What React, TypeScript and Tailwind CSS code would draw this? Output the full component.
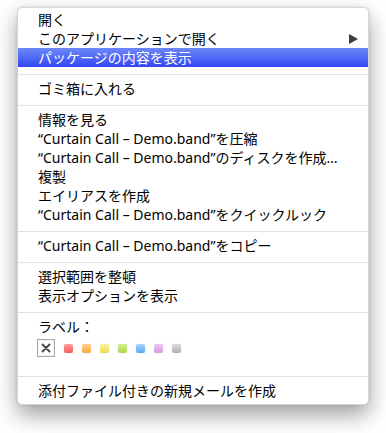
import React from "react";

const Row = ({ children, active = false, arrow = false }: { children: React.ReactNode; active?: boolean; arrow?: boolean }) => (
  <div
    className={
      "relative flex h-[19px] items-center pl-[20px] pr-[12px] text-[14px] leading-[19px] " +
      (active ? "bg-gradient-to-b from-[#6f86f8] to-[#3445f4] text-white" : "text-black")
    }
  >
    <span className="whitespace-nowrap">{children}</span>
    {arrow && (
      <svg className="absolute right-[10px] top-[5px]" width="9" height="10" viewBox="0 0 9 10">
        <polygon points="0,0 9,5 0,10" fill="#3c3c3c" />
      </svg>
    )}
  </div>
);

const Sep = () => (
  <div className="pt-[7px] pb-[4px] px-[0px]">
    <div className="h-px bg-[#e2e2e2]" />
  </div>
);

const swatches = [
  "from-[#ff9a9a] to-[#f25c5c]",
  "from-[#ffd08a] to-[#f7a640]",
  "from-[#fbf49a] to-[#ecdc50]",
  "from-[#d2f08a] to-[#a8d84a]",
  "from-[#a6d4ff] to-[#5aa8f8]",
  "from-[#f0c4f2] to-[#d79ae0]",
  "from-[#dadada] to-[#b2b2b2]",
];

export default function App() {
  return (
    <div
      className="w-[386px] h-[433px] bg-white pl-[17px] pt-[7px]"
      style={{ fontFamily: '"Noto Sans", "Noto Sans CJK JP", sans-serif' }}
    >
      <div className="w-[352px] h-[398px] rounded-[5px] bg-white pt-[2px] pb-[4px] border border-[#d6d6d6] shadow-[0_10px_22px_rgba(0,0,0,0.38),0_0_3px_rgba(0,0,0,0.12)] overflow-hidden flex flex-col">
        <Row>開く</Row>
        <Row arrow>このアプリケーションで開く</Row>
        <Row active>パッケージの内容を表示</Row>
        <Sep />
        <Row>ゴミ箱に入れる</Row>
        <Sep />
        <Row>情報を見る</Row>
        <Row>“Curtain Call – Demo.band”を圧縮</Row>
        <Row>“Curtain Call – Demo.band”のディスクを作成…</Row>
        <Row>複製</Row>
        <Row>エイリアスを作成</Row>
        <Row>“Curtain Call – Demo.band”をクイックルック</Row>
        <Sep />
        <Row>“Curtain Call – Demo.band”をコピー</Row>
        <Sep />
        <Row>選択範囲を整頓</Row>
        <Row>表示オプションを表示</Row>
        <Sep />
        <Row>ラベル：</Row>
        <div className="h-[34px] pl-[19px] pt-[3px] flex items-start gap-[9px]">
          <div className="w-[18px] h-[18px] border border-[#a8a8a8] bg-white flex items-center justify-center shadow-[inset_0_0_0_1px_#f2f2f2]">
            <svg width="10" height="10" viewBox="0 0 10 10">
              <path d="M1.5 1.5 L8.5 8.5 M8.5 1.5 L1.5 8.5" stroke="#4a4a4a" strokeWidth="2" strokeLinecap="round" />
            </svg>
          </div>
          {swatches.map((c, i) => (
            <div key={i} className={"mt-[5px] w-[9px] h-[9px] rounded-[2px] bg-gradient-to-b " + c + " shadow-[0_0_1px_rgba(0,0,0,0.25)]"} />
          ))}
        </div>
        <Sep />
        <Row>添付ファイル付きの新規メールを作成</Row>
      </div>
    </div>
  );
}
